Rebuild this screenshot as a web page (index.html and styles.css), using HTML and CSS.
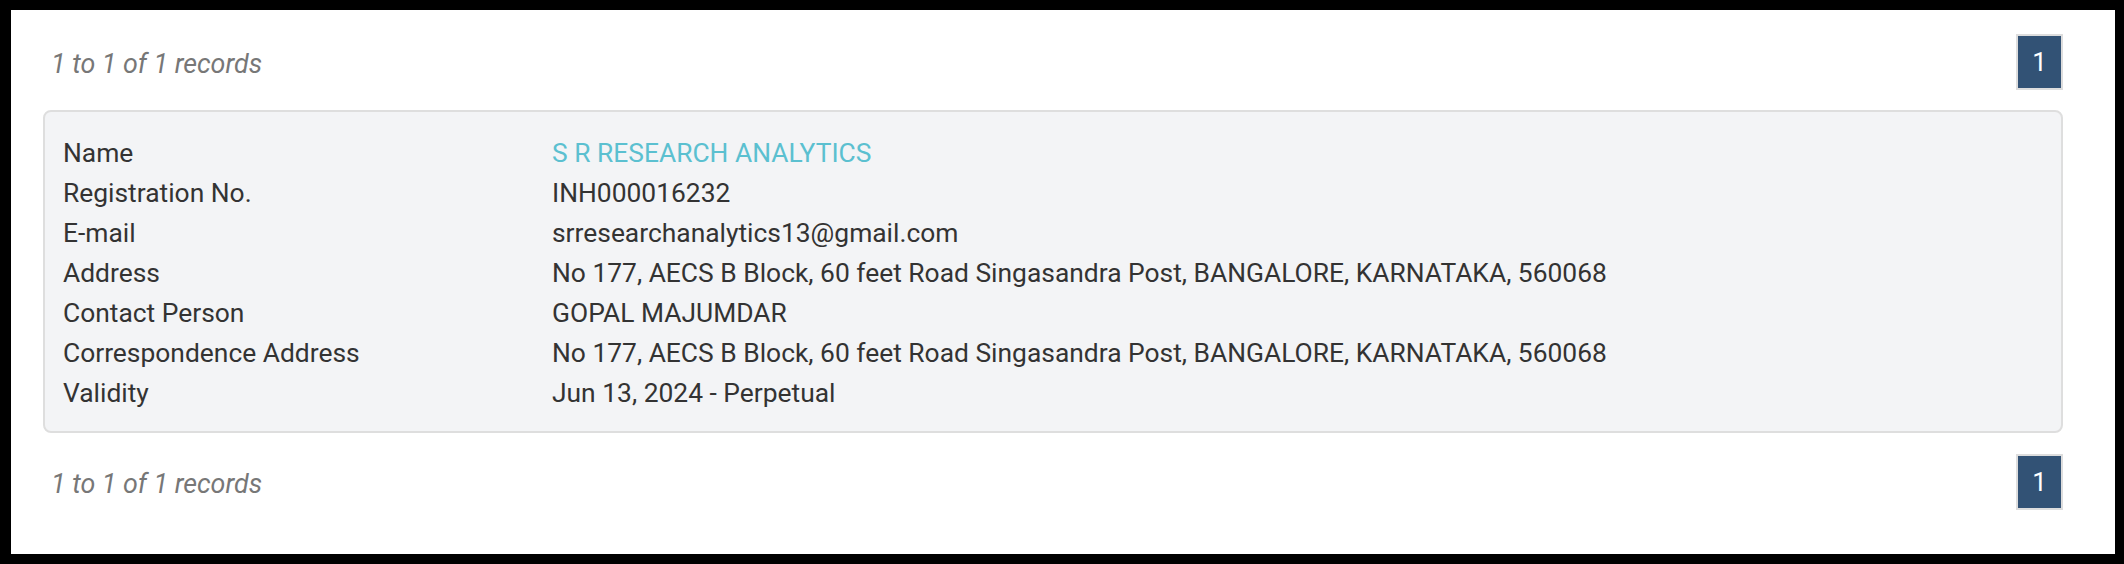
FILE: index.html
```html
<!DOCTYPE html>
<html>
<head>
<meta charset="utf-8">
<link rel="stylesheet" href="styles.css">
</head>
<body>
<div class="frame">
  <div class="pager">
    <span class="count">1 to 1 of 1 records</span>
    <span class="page">1</span>
  </div>
  <div class="card">
    <div class="row"><span class="label">Name</span><span class="value name">S R RESEARCH ANALYTICS</span></div>
    <div class="row"><span class="label">Registration No.</span><span class="value">INH000016232</span></div>
    <div class="row"><span class="label">E-mail</span><span class="value">srresearchanalytics13@gmail.com</span></div>
    <div class="row"><span class="label">Address</span><span class="value">No 177, AECS B Block, 60 feet Road Singasandra Post, BANGALORE, KARNATAKA, 560068</span></div>
    <div class="row"><span class="label">Contact Person</span><span class="value">GOPAL MAJUMDAR</span></div>
    <div class="row"><span class="label">Correspondence Address</span><span class="value">No 177, AECS B Block, 60 feet Road Singasandra Post, BANGALORE, KARNATAKA, 560068</span></div>
    <div class="row"><span class="label">Validity</span><span class="value">Jun 13, 2024 - Perpetual</span></div>
  </div>
  <div class="pager bottom">
    <span class="count">1 to 1 of 1 records</span>
    <span class="page">1</span>
  </div>
</div>
</body>
</html>
```

FILE: styles.css
```css
html, body {
  margin: 0;
  padding: 0;
  background: #000;
}
body {
  padding: 10px 9px 10px 11px;
  font-family: Roboto, "Liberation Sans", sans-serif;
}
.frame {
  background: #fff;
  height: 544px;
  box-sizing: border-box;
  padding: 24px 52px 0 32px;
}
.pager {
  display: flex;
  justify-content: space-between;
  align-items: center;
  height: 56px;
}
.pager.bottom {
  margin-top: 21px;
}
.count {
  font-style: italic;
  color: #777;
  font-size: 26.8px;
  padding-left: 8px;
  padding-top: 4px;
}
.page {
  box-sizing: border-box;
  width: 47px;
  height: 56px;
  border: 2px solid #ddd;
  background: #325275;
  color: #fff;
  font-size: 26px;
  display: flex;
  align-items: center;
  justify-content: center;
}
.card {
  margin-top: 20px;
  box-sizing: border-box;
  height: 323px;
  background: #f3f4f6;
  border: 2px solid #dedede;
  border-radius: 8px;
  padding: 21px 18px 17px 18px;
}
.row {
  display: flex;
  line-height: 40px;
  font-size: 26.4px;
  color: #333;
}
.label {
  width: 489px;
  flex: none;
}
.name {
  color: #5bc0d0;
}
```
